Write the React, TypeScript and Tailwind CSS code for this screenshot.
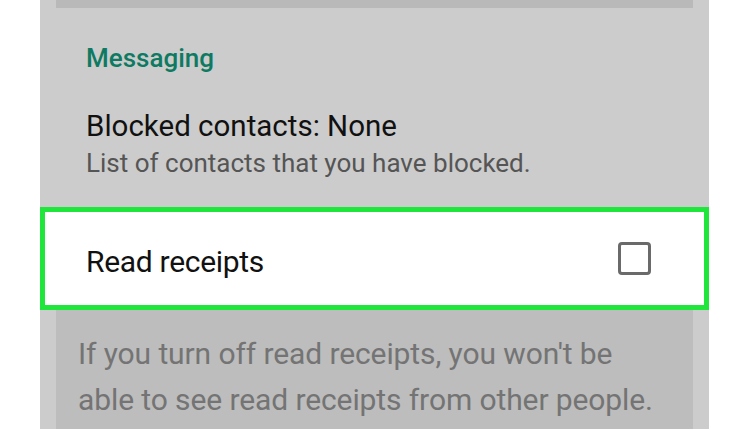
export default function App() {
  return (
    <div className="w-[750px] h-[430px] bg-white overflow-hidden font-['Roboto',sans-serif]">
      <div className="ml-[40px] w-[669px] h-[429px] bg-[#cccccc] flex flex-col">
        {/* previous section tail */}
        <div className="mx-[16px] h-[8px] bg-[#b9b9b9]" />

        <div className="pl-[46px] pt-[34px]">
          <h2 className="text-[26px] leading-[32px] font-medium text-[#0e7a62]">Messaging</h2>
          <p className="mt-[34px] text-[29.5px] leading-[36px] text-[#111]">Blocked contacts: None</p>
          <p className="mt-[3px] text-[26px] leading-[32px] text-[#555]">List of contacts that you have blocked.</p>
        </div>

        {/* highlighted row */}
        <div className="mt-[28px] h-[103px] border-[5px] border-[#1ee63a] bg-white flex items-center justify-between pl-[41px] pr-[53px]">
          <span className="pt-[5px] text-[30px] text-[#111] tracking-[-0.3px]">Read receipts</span>
          <div className="w-[33px] h-[33px] rounded-[4px] border-[3px] border-[#6a6a6a]" />
        </div>

        <div className="mx-[16px] flex-1 bg-[#bdbdbd] pl-[22px] pt-[21px]">
          <p className="text-[30px] leading-[46px] text-[#747474] tracking-[-0.1px]">
            If you turn off read receipts, you won't be
            <br />
            able to see read receipts from other people.
          </p>
        </div>
      </div>
    </div>
  );
}
